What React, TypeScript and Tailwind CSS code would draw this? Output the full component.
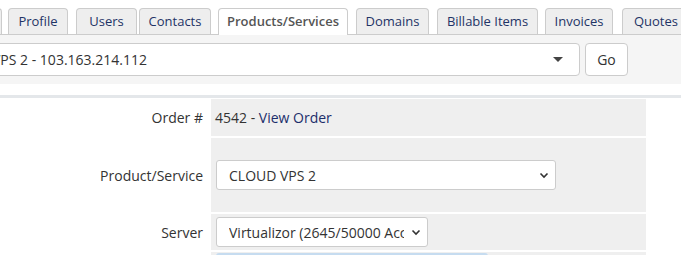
const tabs = [
  { label: "Summary", cls: "w-[72px] ml-[-70px]" },
  { label: "Profile", cls: "w-[60px] ml-[6px]" },
  { label: "Users", cls: "w-[61px] ml-[8px]" },
  { label: "Contacts", cls: "w-[72px] ml-[2px]" },
  { label: "Products/Services", cls: "w-[130px] ml-[7px]", active: true },
  { label: "Domains", cls: "w-[73px] ml-[8px]" },
  { label: "Billable Items", cls: "w-[101px] ml-[8px]" },
  { label: "Invoices", cls: "w-[68px] ml-[7px]" },
  { label: "Quotes", cls: "w-[68px] ml-[9px]" },
];

const Chevron = () => (
  <svg width="10" height="7" viewBox="0 0 10 7" className="shrink-0">
    <path d="M1.5 1.5 L5 5 L8.5 1.5" fill="none" stroke="#333" strokeWidth="1.6" />
  </svg>
);

export default function App() {
  return (
    <div className="w-[681px] h-[255px] overflow-hidden bg-white font-['Open_Sans',sans-serif] text-[14px] text-[#333]">
      {/* tabs */}
      <div className="flex items-end h-[35px] border-b border-[#ccc] pt-[8px] whitespace-nowrap">
        {tabs.map((t) =>
          t.active ? (
            <div
              key={t.label}
              className={`${t.cls} shrink-0 h-[27px] mb-[-1px] bg-white border border-b-0 border-[#ccc] rounded-t-[4px] flex items-center justify-center text-[13px] font-semibold text-[#555]`}
            >
              {t.label}
            </div>
          ) : (
            <div
              key={t.label}
              className={`${t.cls} shrink-0 h-[26px] bg-[#eeeeee] border border-b-0 border-[#ccc] rounded-t-[4px] flex items-center justify-center text-[13px] text-[#1f3466]`}
            >
              {t.label}
            </div>
          )
        )}
      </div>

      {/* client service selector */}
      <div className="h-[49px] bg-[#f5f5f5] flex items-center pt-[0px]">
        <div className="ml-[-20px] w-[600px] h-[33px] bg-white border border-[#ccc] rounded-[4px] flex items-center pl-[11px] pr-[16px]">
          <span className="flex-1">VPS 2 - 103.163.214.112</span>
          <svg width="10" height="5" viewBox="0 0 10 5">
            <polygon points="0,0 10,0 5,5" fill="#444" />
          </svg>
        </div>
        <div className="ml-[5px] w-[43px] h-[33px] bg-white border border-[#ccc] rounded-[4px] flex items-center justify-center">
          Go
        </div>
      </div>

      <div className="h-[11px]" />
      <div className="h-[3px] bg-[#e4e7ea]" />
      <div className="h-[1px]" />

      {/* service detail form */}
      <div className="grid grid-cols-[209px_435px] gap-x-[2px] gap-y-[2px]">
        <div className="h-[37px] flex items-center justify-end pr-[6px]">Order #</div>
        <div className="h-[37px] bg-[#efefef] flex items-center pl-[4px]">
          4542 -&nbsp;<span className="text-[#1c2e6b]">View Order</span>
        </div>

        <div className="h-[74px] flex items-center justify-end pr-[6px]">Product/Service</div>
        <div className="h-[74px] bg-[#efefef] flex items-center pl-[5px]">
          <div className="w-[340px] h-[30px] bg-white border border-[#ccc] rounded-[3px] flex items-center pl-[12px] pr-[6px]">
            <span className="flex-1">CLOUD VPS 2</span>
            <Chevron />
          </div>
        </div>

        <div className="h-[36px] flex items-center justify-end pr-[6px]">Server</div>
        <div className="h-[36px] bg-[#efefef] flex items-center pl-[5px]">
          <div className="w-[212px] h-[30px] bg-white border border-[#ccc] rounded-[3px] flex items-center pl-[12px] pr-[6px] gap-[7px]">
            <span className="flex-1 overflow-hidden whitespace-nowrap">Virtualizor (2645/50000 Accounts)</span>
            <Chevron />
          </div>
        </div>

        <div className="h-[10px]" />
        <div className="h-[10px] bg-[#efefef] pl-[5px] pt-[1px]">
          <div className="w-[272px] h-[9px] bg-[#eaf1f8] border-t-[2px] border-[#c6dcf0] rounded-t-[3px]" />
        </div>
      </div>
    </div>
  );
}
